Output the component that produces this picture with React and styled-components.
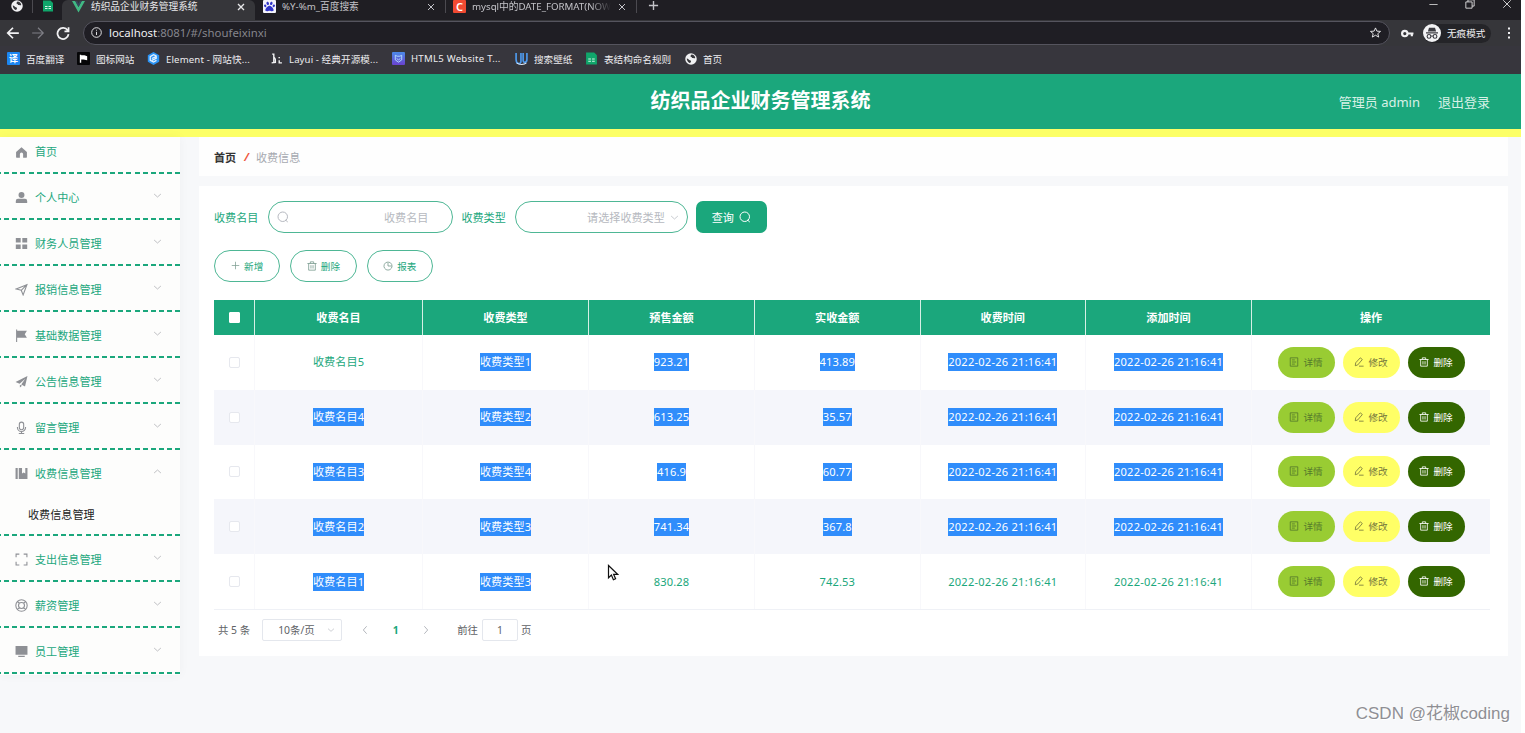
import React from 'react';
import styled, { createGlobalStyle, css } from 'styled-components';
import { FaPaw } from 'react-icons/fa';

const green = '#1ba77c';

const GlobalStyle = createGlobalStyle`
  * {
    box-sizing: border-box;
  }

  body {
    margin: 0;
    background: #fff;
    font-family: "Noto Sans", "Noto Sans CJK SC", sans-serif;
    font-size: 11.1px;
    overflow: hidden;
  }
`;

const Screen = styled.div`
  position: relative;
  display: flex;
  flex-direction: column;
  width: 1521px;
  height: 733px;
  overflow: hidden;
  background: #f7f8fa;
  white-space: nowrap;
`;

/* browser */

const TabStrip = styled.div`
  display: flex;
  align-items: flex-start;
  height: 20px;
  background: #1f1e23;
  color: #c3c3c8;
  font-size: 9.7px;
`;

const PinnedTabs = styled.div`
  display: flex;
  align-items: center;
  width: 62px;
  height: 12px;
  padding-left: 11px;
  gap: 9px;
`;

const Tab = styled.div`
  display: flex;
  align-items: center;
  width: ${({ $width }) => $width}px;
  height: 20px;
  padding: 0 10px 7px ${({ $left }) => $left || 8}px;
  border-radius: 0 0 4px 4px;

  ${({ $active }) => $active && css`
    background: #36363a;
    border-radius: 6px 6px 0 0;
    color: #e8e8ea;
  `}
`;

const TabTitle = styled.span`
  flex: 1;
  margin: 0 ${({ $fade }) => ($fade ? 7 : 30)}px 0 6px;
  line-height: 13px;

  ${({ $fade }) => $fade && css`
    mask-image: linear-gradient(90deg, #000 85%, transparent);
  `}
`;

const Divider = styled.i`
  width: 1px;
  height: 13px;
  background: #4b4a50;
`;

const NewTab = styled.div`
  height: 12px;
  padding: 0 0 0 11px;
`;

const WindowButtons = styled.div`
  display: flex;
  align-items: center;
  gap: 27px;
  height: 8px;
  margin-left: auto;
  padding-right: 9px;
`;

const Toolbar = styled.div`
  display: flex;
  align-items: center;
  height: 26px;
  padding: 1px 6px 1px 6px;
  background: #36363a;
  color: #f1f1f3;
`;

const NavButtons = styled.div`
  display: flex;
  width: 77px;
  gap: 11px;
`;

const AddressBar = styled.div`
  display: flex;
  align-items: center;
  width: 1307px;
  height: 24px;
  padding: 0 8px 1px 7px;
  border: 1px solid #55545e;
  border-radius: 12px;
  background: #1f1e24;
`;

const Url = styled.span`
  flex: 1;
  margin-left: 7px;
  font-size: 11.4px;
  color: #85858c;

  b {
    font-weight: 400;
    color: #f0f0f2;
  }
`;

const Incognito = styled.div`
  display: flex;
  align-items: center;
  width: 68px;
  height: 19px;
  margin: 0 12px 0 9px;
  border-radius: 10px;
  background: #242428;
  font-size: 9.6px;
  gap: 6px;
`;

const Bookmarks = styled.div`
  display: flex;
  align-items: center;
  height: 28px;
  padding: 0 0 3px 7px;
  background: #37363d;
  color: #ececef;
  font-size: 9.6px;
`;

const Bookmark = styled.div`
  display: flex;
  align-items: center;
  width: ${({ $width }) => $width}px;
  gap: 6px;
  letter-spacing: ${({ $spacing }) => $spacing || 0}px;
`;

const Badge = styled.span`
  display: flex;
  align-items: center;
  justify-content: center;
  flex: none;
  width: 13px;
  height: 13px;
  border-radius: 1px;
  background: ${({ $bg }) => $bg};
  color: ${({ $color }) => $color || '#fff'};
  font-size: ${({ $size }) => $size || 9}px;
  font-weight: 600;
  line-height: 1;
`;

/* page */

const Header = styled.header`
  display: grid;
  grid-template-columns: 1fr auto 1fr;
  align-items: center;
  flex: none;
  height: 63px;
  padding: 0 31px 1px;
  border-bottom: 8px solid #fcff66;
  background: ${green};
  color: #fff;
`;

const Title = styled.h1`
  grid-column: 2;
  margin: 0;
  font-size: 20px;
  line-height: 24px;
`;

const UserLinks = styled.div`
  display: flex;
  justify-content: flex-end;
  gap: 18px;
  font-size: 13px;
  color: #d8f1e7;
`;

const Body = styled.div`
  display: flex;
  flex: 1;
`;

const Sidebar = styled.nav`
  width: 180px;
  height: 538px;
  background: #fdfdfc;
  box-shadow: 0 0 10px rgba(0, 0, 0, 0.04);
`;

const MenuItem = styled.div`
  display: flex;
  align-items: center;
  height: ${({ $height }) => $height || 46}px;
  padding: 0 18px ${({ $first }) => ($first ? 6 : 0)}px 15px;
  color: ${green};
  background: ${({ $line }) => ($line ? `repeating-linear-gradient(90deg, ${green} 0 5px, transparent 5px 8.15px) -4px 100% / 200px 2px no-repeat` : 'none')};

  span {
    flex: 1;
    margin-left: 7px;
    padding-bottom: ${({ $first }) => ($first ? 3 : 1)}px;
  }

  svg:last-child {
    margin-bottom: ${({ $first }) => ($first ? 0 : 4)}px;
  }
`;

const SubMenuItem = styled(MenuItem)`
  height: 40px;
  padding: 0 0 3px 21px;
  color: #222;
`;

const Main = styled.main`
  display: flex;
  flex-direction: column;
  width: 1309px;
  margin-left: 19px;
`;

const Breadcrumb = styled.div`
  display: flex;
  align-items: center;
  height: 39px;
  padding-left: 15px;
  background: #fefefe;
  color: #a6a9b0;

  b {
    color: #333;
    font-weight: 600;
  }

  i {
    margin: 0 7px 0 8px;
    color: #f0563c;
    font-weight: 700;
  }
`;

const Card = styled.section`
  height: 470px;
  margin-top: 10px;
  padding: 15px 18px 0 15px;
  background: #fff;
`;

const Filters = styled.div`
  display: flex;
  align-items: center;
  height: 32px;
  color: ${green};
`;

const Field = styled.div`
  display: flex;
  align-items: center;
  justify-content: flex-end;
  width: ${({ $width }) => $width}px;
  height: 32px;
  margin: 0 8px 0 ${({ $left }) => $left}px;
  padding: 0 ${({ $right }) => $right}px 0 8px;
  gap: 5px;
  border: 1px solid #4eb795;
  border-radius: 16px;
  color: #b6b9c0;

  span {
    flex: 1;
    text-align: right;
    padding-bottom: 1px;
  }
`;

const SearchButton = styled.button`
  display: flex;
  align-items: center;
  justify-content: center;
  width: 71px;
  height: 32px;
  padding: 0;
  gap: 5px;
  border: 0;
  border-radius: 7px;
  background: ${green};
  color: #fff;
  font: inherit;
`;

const Actions = styled.div`
  display: flex;
  gap: 10px;
  margin: 17px 0 18px;
`;

const OutlineButton = styled.button`
  display: flex;
  align-items: center;
  justify-content: center;
  width: 66.3px;
  height: 32px;
  padding: 0 0 1px;
  gap: 4px;
  border: 1px solid #4eb795;
  border-radius: 16px;
  background: #fff;
  color: ${green};
  font: inherit;
  font-size: 9.6px;
`;

const Table = styled.table`
  width: 1276px;
  border-collapse: separate;
  border-spacing: 0;
  table-layout: fixed;
  border-bottom: 1px solid #eff1f6;
  color: ${green};
  text-align: center;

  th {
    height: 35px;
    padding: 0 0 1px;
    border-right: 1px solid #d6efe5;
    background: ${green};
    color: #fff;
  }

  th:last-child,
  td:last-child {
    border-right: 0;
  }

  td {
    height: 54.8px;
    padding: 0;
    border-right: 1px solid #f8f8fb;
  }

  tbody tr:nth-child(even) td {
    background: #f5f6fb;
  }
`;

const Checkbox = styled.i`
  display: block;
  width: 11px;
  height: 11px;
  margin: 0 auto;
  border: 1px solid ${({ $head }) => ($head ? '#fff' : '#e6e8ee')};
  border-radius: ${({ $head }) => ($head ? 1 : 2)}px;
  background: #fff;
`;

const Value = styled.span`
  display: inline-block;
  height: 18px;
  line-height: 17px;
  letter-spacing: ${({ $spacing }) => $spacing || 0.1}px;
  vertical-align: middle;

  ${({ $selected }) => $selected && css`
    background: #308dfb;
    color: #fff;
  `}
`;

const RowActions = styled.div`
  display: flex;
  justify-content: center;
  gap: 8px;
`;

const PillButton = styled.button`
  display: flex;
  align-items: center;
  justify-content: center;
  width: 57px;
  height: 31px;
  padding: 0 0 1px;
  gap: 4px;
  border: 0;
  border-radius: 16px;
  background: ${({ $bg }) => $bg};
  color: ${({ $color }) => $color};
  font: inherit;
  font-size: 9.6px;
`;

const Pagination = styled.div`
  display: flex;
  align-items: center;
  height: 22px;
  margin-top: 9px;
  padding-left: 4px;
  color: #606266;
  font-size: 10.4px;
`;

const PageSize = styled.div`
  display: flex;
  align-items: center;
  justify-content: space-between;
  width: 80px;
  height: 22px;
  margin: 0 18px 0 12px;
  padding: 0 6px 0 15px;
  border: 1px solid #e4e7ed;
  border-radius: 2px;
`;

const PageNumber = styled.b`
  width: 21px;
  margin: 0 15px;
  text-align: center;
  color: ${green};
`;

const PageInput = styled.div`
  width: 36px;
  height: 22px;
  margin: 0 3px 0 4px;
  border: 1px solid #e4e7ed;
  border-radius: 2px;
  line-height: 20px;
  text-align: center;
`;

const Cursor = styled.svg`
  position: absolute;
  left: 607px;
  top: 564px;
`;

const Watermark = styled.div`
  position: absolute;
  right: 11px;
  bottom: 6px;
  color: #8f8f94;
  font-family: "Liberation Sans", "Noto Sans CJK SC", sans-serif;
  font-size: 17px;
  line-height: 26px;
  text-shadow: 1px 1px 0 #fff;
`;

const paths = {
  home: <path fill="currentColor" stroke="none" d="M12 2.500 22 11v9.500a1 1 0 0 1-1 1h-6V15a3 3 0 0 0-6 0v6.500H3a1 1 0 0 1-1-1V11z" />,
  user: <path fill="currentColor" stroke="none" d="M12 2a5.500 5.500 0 1 1 0 11 5.500 5.500 0 0 1 0-11zM1.500 22v-3.500a4 4 0 0 1 4-4h13a4 4 0 0 1 4 4V22z" />,
  grid: <path fill="currentColor" stroke="none" d="M1.500 2h9v8h-9zM13.500 2h9v8h-9zM1.500 14h9v8h-9zM13.500 14h9v8h-9z" />,
  position: <path d="M2 11 22 3l-7 19-3.500-8.500z M11.500 13.500 22 3" />,
  flag: <path fill="currentColor" stroke="none" d="M2 1h2v2h18l-4 6.500 4 6.500H4v8H2z" />,
  promotion: <path fill="currentColor" stroke="none" d="m1 13 22-11-4.500 19-7-3.500L19 7 8.500 16zM9 18l4 1.800L9 23z" />,
  mic: <path d="M12 2a4 4 0 0 1 4 4v6a4 4 0 0 1-8 0V6a4 4 0 0 1 4-4zM4.500 11v1a7.500 7.500 0 0 0 15 0v-1M12 19.500V23M7 23h10" />,
  book: <path fill="currentColor" stroke="none" d="M1 2h4v20H1zM7 2h6v10l3-2 3 2V2h4v20H7z" />,
  scan: <path d="M2 8V2h6M16 2h6v6M22 16v6h-6M8 22H2v-6" />,
  help: <path d="M12 1.500a10.500 10.500 0 1 1 0 21 10.500 10.500 0 0 1 0-21zM12 6.500a5.500 5.500 0 1 1 0 11 5.500 5.500 0 0 1 0-11zM4.500 4.500 8 8M19.500 4.500 16 8M4.500 19.500 8 16M19.500 19.500 16 16" />,
  monitor: <path fill="currentColor" stroke="none" d="M1 2h22v16H1zM6 20h12v2H6z" />,
  down: <path d="m3 8 9 8 9-8" />,
  up: <path d="m3 16 9-8 9 8" />,
  left: <path d="m16 3-8 9 8 9" />,
  right: <path d="m8 3 8 9-8 9" />,
  search: <path d="M11.500 2a9.500 9.500 0 1 1 0 19 9.500 9.500 0 0 1 0-19zM17 18l4.500 4" />,
  plus: <path d="M12 2v20M2 12h20" />,
  trash: <path d="M1 6h22M8 6V2h8v4M4 6v16h16V6M9.500 10v8M14.500 10v8" />,
  pie: <path d="M13 2.500a9.700 9.700 0 1 1-2 0M12 2v10h9" />,
  doc: <path d="M3 2h18v20H3zM7 7h7M7 12h10M7 17h7" />,
  edit: <path d="M15 2l5 4L9 19l-6 2 1-7zM12 22h11" />,
  close: <path d="m3 3 18 18M21 3 3 21" />,
  back: <path d="M22 12H3M12 3l-9 9 9 9" />,
  forward: <path d="M2 12h19M12 3l9 9-9 9" />,
  reload: <path d="M20 7.500A9.500 9.500 0 1 0 21.500 14M21.500 2v7h-7" />,
  info: <path d="M12 1.500a10.500 10.500 0 1 1 0 21 10.500 10.500 0 0 1 0-21zM12 10.500v7M12 6v2" />,
  star: <path d="m12 2 3 7 8 .6-6 5 2 7.400-7-4-7 4 2-7.400-6-5L9 9z" />,
  min: <path d="M1 12h22" />,
  restore: <path d="M2 7h15v15H2zM7 7V2h15v15h-5" />,
  key: <path d="M7 7a5 5 0 1 1 0 10A5 5 0 0 1 7 7zM12 12h11M20 12v5" />,
  dots: <path fill="currentColor" stroke="none" d="M10 1h4v4h-4zM10 10h4v4h-4zM10 19h4v4h-4z" />,
  globe: (
    <>
      <circle cx="12" cy="12" r="11.500" fill="#f1f1f3" stroke="none" />
      <path fill="#36363a" stroke="none" d="M13 3c4 0 7 3 7.500 7-2 2-3-1-5 0s-1-2-3-2-2-3 .5-5zM3.500 11c4 0 3 3 6 3.500s3 2 2 3.500-1 2.500-3 1.500-5-4-5-8.500z" />
    </>
  ),
  sheet: (
    <>
      <path fill="#10a66b" stroke="none" d="M2 1h15l5 5v17H2z" />
      <path stroke="#d5f5e7" strokeWidth="2" d="M6 13h5M13 13h5M6 17h5M13 17h5" />
    </>
  ),
  vue: (
    <>
      <path fill="#41b883" stroke="none" d="M0 2h6l6 11 6-11h6L12 23z" />
      <path fill="#35495e" stroke="none" d="M6 2h3.500L12 7l2.500-5H18l-6 11z" />
    </>
  ),
  flagMark: <path fill="#fff" stroke="none" d="M4 4h3v1h7l6 2v9l-8-2H7v7H4z" />,
  element: (
    <>
      <path fill="#2a93f5" stroke="none" d="m12 0 10.500 6v12L12 24 1.500 18V6z" />
      <path stroke="#e4f2ff" strokeWidth="2.400" d="m17 7-5-2-6 3.500v7l6 3 5.500-3M9 12l8-3.500v3L9 15.500" />
    </>
  ),
  layui: <path stroke="#f1f1f3" strokeWidth="2.600" d="M4 4h3v15M3 20l8-1M10 19c1-4 0-7-2-9M17 9v2.500M17 15v5h5" />,
  html: <path stroke="#b8e2ff" strokeWidth="2" d="M5 5l4 2h6l4-2v10l-7 5-7-5zM8 12l4 3 4-3" />,
  wall: (
    <>
      <path stroke="#4f9cf0" strokeWidth="3" d="M2 2v12c0 9 9 9 9 3V2M15 2v13c0 6 7 5 7-1V2" />
      <path stroke="#e2efff" strokeWidth="2" d="M3 20c5 4 14 4 18 0" />
    </>
  ),
  spy: (
    <>
      <circle cx="12" cy="12" r="12" fill="#f3f3f5" stroke="none" />
      <path fill="#3c3c42" stroke="none" d="M8 5h8l1.500 5H6.500zM4 11h16v1.500H4z" />
      <path stroke="#3c3c42" strokeWidth="1.500" d="M8 14a2.500 2.500 0 1 1 0 5 2.500 2.500 0 0 1 0-5zM16 14a2.500 2.500 0 1 1 0 5 2.500 2.500 0 0 1 0-5zM10.500 16h3" />
    </>
  ),
};

function Icon({ name, size = 12, color = 'currentColor', weight = 2 }) {
  return (
    <svg
      width={size}
      height={size}
      viewBox="0 0 24 24"
      fill="none"
      stroke="currentColor"
      strokeWidth={weight}
      color={color}
      style={{ flex: 'none', display: 'block' }}
    >
      {paths[name]}
    </svg>
  );
}

const menu = [
  { icon: 'home', label: '首页', height: 37 },
  { icon: 'user', label: '个人中心', arrow: 'down' },
  { icon: 'grid', label: '财务人员管理', arrow: 'down' },
  { icon: 'position', label: '报销信息管理', arrow: 'down' },
  { icon: 'flag', label: '基础数据管理', arrow: 'down' },
  { icon: 'promotion', label: '公告信息管理', arrow: 'down' },
  { icon: 'mic', label: '留言管理', arrow: 'down' },
  { icon: 'book', label: '收费信息管理', arrow: 'up', child: '收费信息管理' },
  { icon: 'scan', label: '支出信息管理', arrow: 'down' },
  { icon: 'help', label: '薪资管理', arrow: 'down' },
  { icon: 'monitor', label: '员工管理', arrow: 'down' },
];

const columns = ['收费名目', '收费类型', '预售金额', '实收金额', '收费时间', '添加时间'];
const widths = [41, 168, 166, 166, 165.5, 165.5, 166, 238];
const time = '2022-02-26 21:16:41';

// from / to: range of cells covered by the text selection
const rows = [
  { cells: ['收费名目5', '收费类型1', '923.21', '413.89', time, time], from: 1, to: 6 },
  { cells: ['收费名目4', '收费类型2', '613.25', '35.57', time, time], from: 0, to: 6 },
  { cells: ['收费名目3', '收费类型4', '416.9', '60.77', time, time], from: 0, to: 6 },
  { cells: ['收费名目2', '收费类型3', '741.34', '367.8', time, time], from: 0, to: 6 },
  { cells: ['收费名目1', '收费类型3', '830.28', '742.53', time, time], from: 0, to: 2 },
];

function Browser() {
  return (
    <>
      <TabStrip>
        <PinnedTabs>
          <Icon name="globe" size={12} />
          <Divider />
          <Icon name="sheet" size={12} />
        </PinnedTabs>
        <Tab $width={193} $left={10} $active>
          <Icon name="vue" size={13} />
          <TabTitle>纺织品企业财务管理系统</TabTitle>
          <Icon name="close" size={8} weight={4} />
        </Tab>
        <Tab $width={190}>
          <Badge $bg="#f4f4fb" $color="#3034c8"><FaPaw size={11} /></Badge>
          <TabTitle>%Y-%m_百度搜索</TabTitle>
          <Icon name="close" size={8} weight={3} />
        </Tab>
        <Divider />
        <Tab $width={190} $left={7}>
          <Badge $bg="#f04a32" $size={11}>C</Badge>
          <TabTitle $fade>mysql中的DATE_FORMAT(NOW</TabTitle>
          <Icon name="close" size={8} weight={3} />
        </Tab>
        <Divider />
        <NewTab><Icon name="plus" size={11} weight={3} /></NewTab>
        <WindowButtons>
          <Icon name="min" size={9} color="#eee" />
          <Icon name="restore" size={10} color="#eee" />
          <Icon name="close" size={10} color="#eee" />
        </WindowButtons>
      </TabStrip>
      <Toolbar>
        <NavButtons>
          <Icon name="back" size={14} weight={3} />
          <Icon name="forward" size={14} color="#7f7f86" />
          <Icon name="reload" size={14} weight={3} />
        </NavButtons>
        <AddressBar>
          <Icon name="info" size={11} />
          <Url><b>localhost</b>:8081/#/shoufeixinxi</Url>
          <Icon name="star" size={11} />
        </AddressBar>
        <div style={{ marginLeft: 'auto' }}><Icon name="key" size={13} weight={4} /></div>
        <Incognito>
          <Icon name="spy" size={18} />
          无痕模式
        </Incognito>
        <Icon name="dots" size={12} />
      </Toolbar>
      <Bookmarks>
        <Bookmark $width={70}><Badge $bg="#1c86f2">译</Badge>百度翻译</Bookmark>
        <Bookmark $width={70}><Badge $bg="#050507"><Icon name="flagMark" size={11} /></Badge>图标网站</Bookmark>
        <Bookmark $width={123} $spacing={0.15}><Icon name="element" size={13} />Element - 网站快...</Bookmark>
        <Bookmark $width={122} $spacing={0.1}><Icon name="layui" size={13} />Layui - 经典开源模...</Bookmark>
        <Bookmark $width={123} $spacing={0.25}>
          <Badge $bg="linear-gradient(#4b8ae8, #6a42cf)"><Icon name="html" size={11} /></Badge>
          HTML5 Website T...
        </Bookmark>
        <Bookmark $width={70}><Icon name="wall" size={13} />搜索壁纸</Bookmark>
        <Bookmark $width={100}><Icon name="sheet" size={13} />表结构命名规则</Bookmark>
        <Bookmark $width={60}><Icon name="globe" size={12} />首页</Bookmark>
      </Bookmarks>
    </>
  );
}

function Menu() {
  return (
    <Sidebar>
      {menu.map(({ icon, label, height, arrow, child }) => (
        <React.Fragment key={label}>
          <MenuItem $height={height} $first={!arrow} $line={!child}>
            <Icon name={icon} size={13} color="#8e9095" />
            <span>{label}</span>
            {arrow && <Icon name={arrow} size={9} color="#a9abb0" />}
          </MenuItem>
          {child && <SubMenuItem $line><span>{child}</span></SubMenuItem>}
        </React.Fragment>
      ))}
    </Sidebar>
  );
}

function FeeTable() {
  return (
    <Table>
      <colgroup>
        {widths.map((width, index) => <col key={index} width={width} />)}
      </colgroup>
      <thead>
        <tr>
          <th><Checkbox $head /></th>
          {columns.map((column) => <th key={column}>{column}</th>)}
          <th>操作</th>
        </tr>
      </thead>
      <tbody>
        {rows.map(({ cells, from, to }) => (
          <tr key={cells[0]}>
            <td><Checkbox /></td>
            {cells.map((cell, index) => (
              <td key={index}>
                <Value $selected={index >= from && index < to} $spacing={index > 3 ? 0.23 : 0.1}>{cell}</Value>
              </td>
            ))}
            <td>
              <RowActions>
                <PillButton $bg="#99cc33" $color="#557a2c"><Icon name="doc" size={10} />详情</PillButton>
                <PillButton $bg="#ffff66" $color="#73753d"><Icon name="edit" size={10} />修改</PillButton>
                <PillButton $bg="#336600" $color="#fff"><Icon name="trash" size={10} />删除</PillButton>
              </RowActions>
            </td>
          </tr>
        ))}
      </tbody>
    </Table>
  );
}

function App() {
  return (
    <Screen>
      <GlobalStyle />
      <Browser />
      <Header>
        <Title>纺织品企业财务管理系统</Title>
        <UserLinks>
          <span>管理员 admin</span>
          <span>退出登录</span>
        </UserLinks>
      </Header>
      <Body>
        <Menu />
        <Main>
          <Breadcrumb>
            <b>首页</b>
            <i>/</i>
            收费信息
          </Breadcrumb>
          <Card>
            <Filters>
              收费名目
              <Field $width={185} $left={10} $right={24}>
                <Icon name="search" size={12} />
                <span>收费名目</span>
              </Field>
              收费类型
              <Field $width={173} $left={9} $right={8}>
                <span>请选择收费类型</span>
                <Icon name="down" size={9} />
              </Field>
              <SearchButton>查询<Icon name="search" size={12} /></SearchButton>
            </Filters>
            <Actions>
              <OutlineButton><Icon name="plus" size={9} color="#7d9d92" />新增</OutlineButton>
              <OutlineButton><Icon name="trash" size={10} color="#7d9d92" />删除</OutlineButton>
              <OutlineButton><Icon name="pie" size={10} color="#7d9d92" />报表</OutlineButton>
            </Actions>
            <FeeTable />
            <Pagination>
              共 5 条
              <PageSize>10条/页<Icon name="down" size={8} color="#b5b8c0" /></PageSize>
              <Icon name="left" size={10} color="#a5a8b0" />
              <PageNumber>1</PageNumber>
              <Icon name="right" size={10} color="#a5a8b0" />
              <span style={{ marginLeft: 26 }}>前往</span>
              <PageInput>1</PageInput>
              页
            </Pagination>
          </Card>
        </Main>
      </Body>
      <Cursor width="12" height="18" viewBox="0 0 12 18">
        <path d="M1.500 1.500v12.300l2.900-2.700 2 4.700 2.200-1-2-4.500h4z" fill="#fff" stroke="#111" strokeWidth="1.200" />
      </Cursor>
      <Watermark>CSDN @花椒coding</Watermark>
    </Screen>
  );
}

export default App;
